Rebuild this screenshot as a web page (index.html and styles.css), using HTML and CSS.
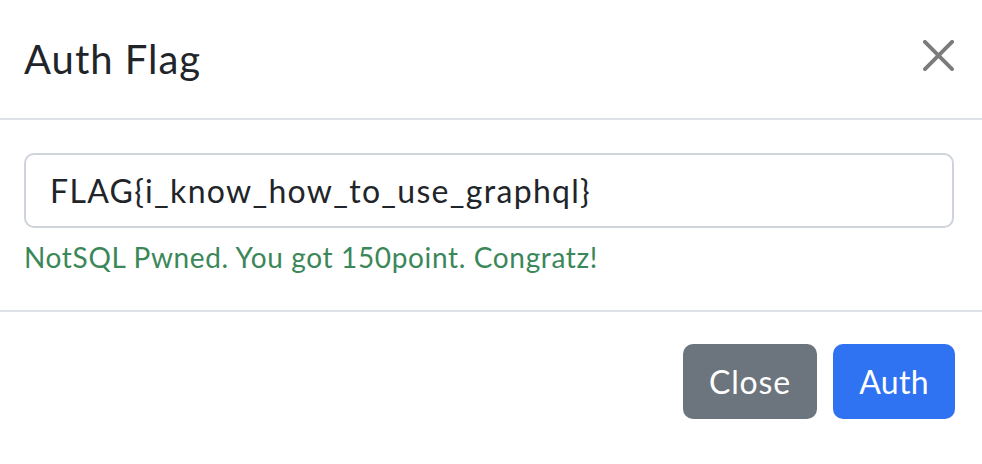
FILE: index.html
```html
<!DOCTYPE html>
<html>
<head>
<meta charset="utf-8">
<link rel="stylesheet" href="styles.css">
</head>
<body>
<div class="modal">
  <div class="modal-header">
    <h5 class="modal-title">Auth Flag</h5>
    <button class="btn-close" aria-label="Close">
      <svg viewBox="0 0 16 16" width="32" height="32"><path fill="currentColor" d="M.293.293a1 1 0 0 1 1.414 0L8 6.586 14.293.293a1 1 0 1 1 1.414 1.414L9.414 8l6.293 6.293a1 1 0 0 1-1.414 1.414L8 9.414l-6.293 6.293a1 1 0 0 1-1.414-1.414L6.586 8 .293 1.707a1 1 0 0 1 0-1.414z"/></svg>
    </button>
  </div>
  <div class="modal-body">
    <input class="form-control" type="text" value="FLAG{i_know_how_to_use_graphql}">
    <div class="valid-feedback">NotSQL Pwned. You got 150point. Congratz!</div>
  </div>
  <div class="modal-footer">
    <button class="btn btn-secondary">Close</button>
    <button class="btn btn-primary">Auth</button>
  </div>
</div>
</body>
</html>
```
FILE: styles.css
```css
* { box-sizing: border-box; }
html, body { margin: 0; background: #fff; }
body { font-family: "Lato", "Open Sans", sans-serif; color: #212529; }
.modal { width: 982px; height: 464px; }
.modal-header {
  height: 120px;
  display: flex;
  align-items: center;
  justify-content: space-between;
  padding: 0 28px 0 24px;
  border-bottom: 2px solid #dee2e6;
}
.modal-title {
  margin: 0;
  font-size: 40px;
  font-weight: 400;
  line-height: 48px;
  letter-spacing: 1px;
  color: #212529;
}
.btn-close {
  border: 0;
  background: transparent;
  padding: 0;
  width: 31px;
  height: 31px;
  color: #7b7b7b;
  margin-bottom: 8px;
  display: flex;
}
.btn-close svg { width: 31px; height: 31px; }
.modal-body {
  padding: 33px 28px 30px 24px;
  height: 190px;
}
.form-control {
  display: block;
  width: 100%;
  height: 75px;
  padding: 12px 24px;
  font-family: inherit;
  font-size: 32px;
  line-height: 48px;
  letter-spacing: 1.3px;
  color: #212529;
  border: 2px solid #ced4da;
  border-radius: 10px;
  background: #fff;
  outline: none;
}
.valid-feedback {
  margin-top: 8px;
  font-size: 28px;
  line-height: 42px;
  letter-spacing: 0.65px;
  color: #3c875a;
}
.modal-footer {
  border-top: 2px solid #dee2e6;
  display: flex;
  justify-content: flex-end;
  gap: 16px;
  padding: 32px 27px 0 24px;
}
.btn {
  font-family: inherit;
  font-size: 32px;
  line-height: 48px;
  height: 75px;
  padding: 12px 0;
  border: 2px solid transparent;
  border-radius: 10px;
  color: #fff;
  text-align: center;
}
.btn-secondary { background: #6c757d; border-color: #6c757d; width: 134px; letter-spacing: 0.8px; }
.btn-primary { background: #2f73f2; border-color: #2f73f2; width: 122px; letter-spacing: 0.3px; }
```
